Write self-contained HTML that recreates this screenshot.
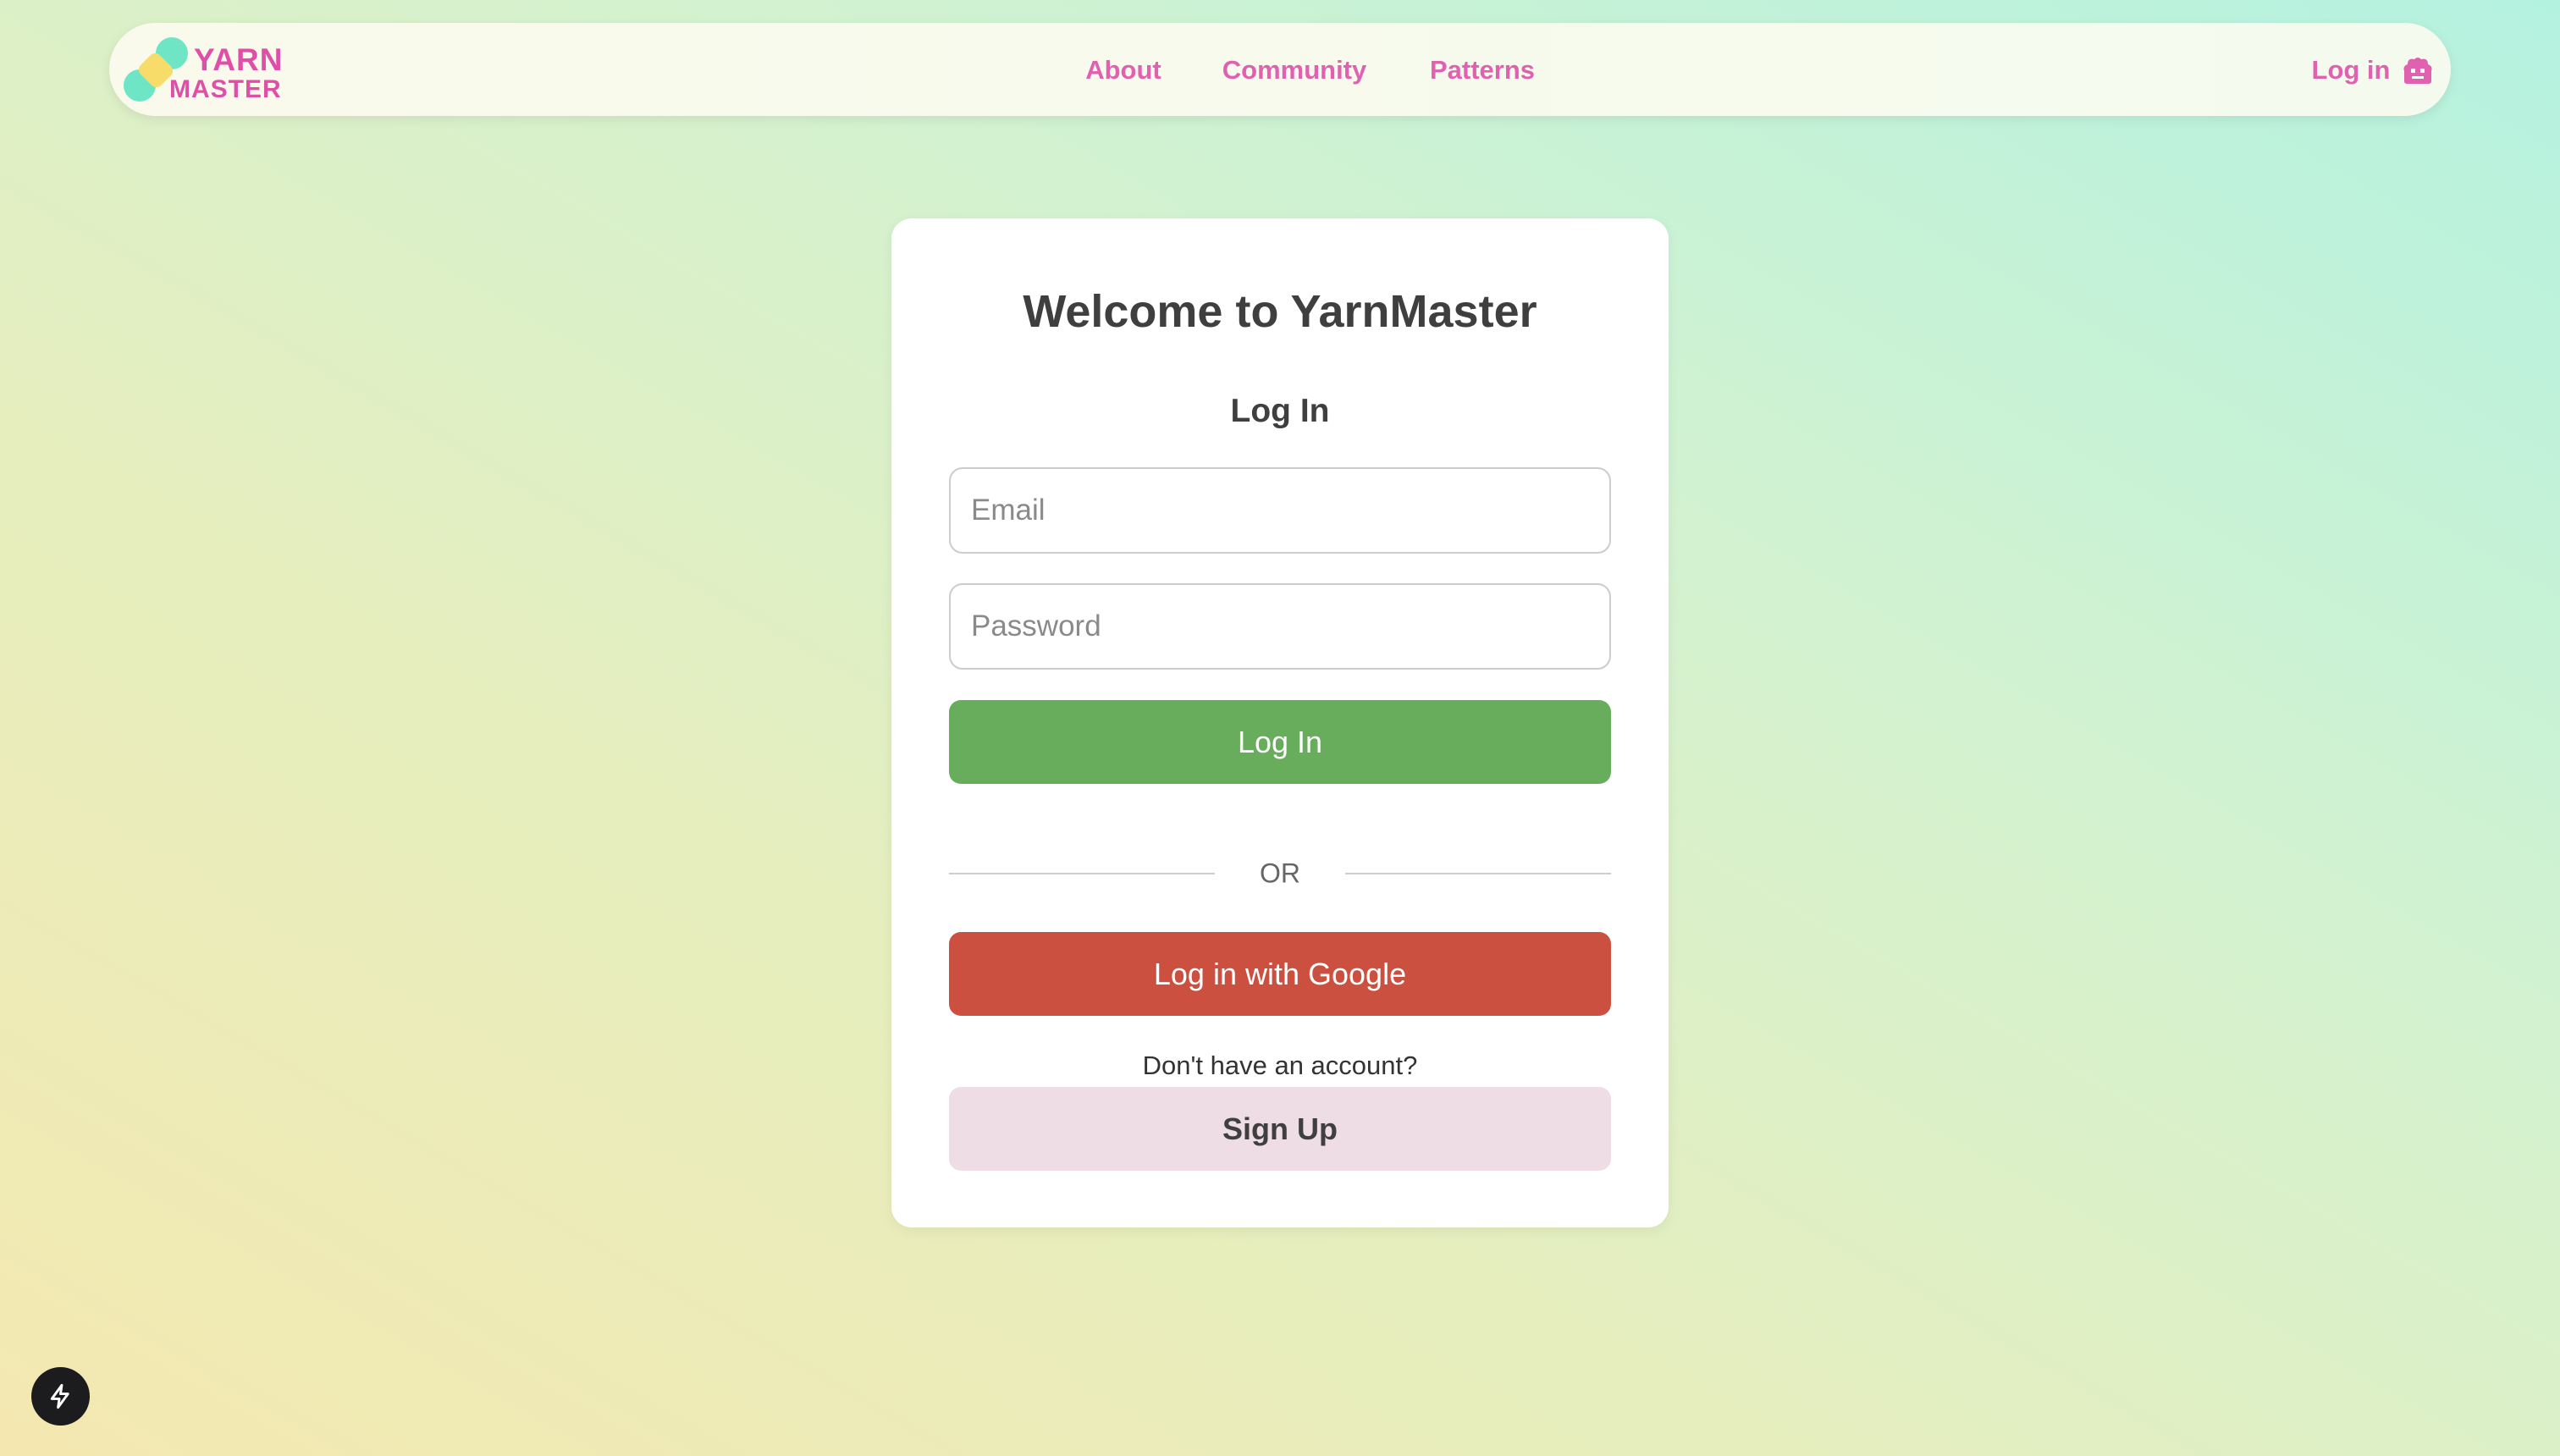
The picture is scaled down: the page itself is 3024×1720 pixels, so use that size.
<!DOCTYPE html>
<html><head><meta charset="utf-8"><style>
*{box-sizing:border-box;margin:0;padding:0}
html,body{width:3024px;height:1720px;overflow:hidden}
body{font-family:"Liberation Sans",sans-serif;background:linear-gradient(30deg,#f4e8b0 0%,#e6eebe 35%,#d2f2d0 65%,#b4f2e0 100%);position:relative}
.nav{position:absolute;left:129px;top:27px;width:2766px;height:110px;border-radius:55px;background:linear-gradient(90deg,#fafaec,#f4fbee);box-shadow:0 4px 14px rgba(0,0,0,.08)}
.lnk{position:absolute;top:83px;transform:translate(-50%,-50%);color:#e061b0;font-weight:bold;font-size:31px}
.card{position:absolute;left:1053px;top:258px;width:918px;height:1192px;background:#fff;border-radius:24px;box-shadow:0 4px 16px rgba(0,0,0,.06)}
.c{position:absolute;left:0;width:100%;text-align:center;transform:translateY(-50%)}
.inp{position:absolute;left:68px;width:782px;height:102px;border:2px solid #ccc;border-radius:16px;font-size:35px;color:#8a8a8a;padding-left:24px;line-height:98px}
.btn{position:absolute;left:68px;width:782px;height:99px;border-radius:14px;color:#fff;font-size:36px;text-align:center;line-height:99px}
</style></head><body>
<div class="nav"></div>
<svg style="position:absolute;left:143px;top:40px" width="84" height="85" viewBox="0 0 84 85">
<circle cx="60" cy="23" r="19" fill="#6ee6c6"/><circle cx="22" cy="61" r="19" fill="#6ee6c6"/>
<rect x="24" y="27" width="34" height="32" rx="8" transform="rotate(45 41 43)" fill="#f7dc6a"/>
</svg>
<div style="position:absolute;left:229px;top:52px;color:#df4fa8;font-weight:bold;font-size:37px;line-height:38px;letter-spacing:1px">YARN</div>
<div style="position:absolute;left:200px;top:90px;color:#df4fa8;font-weight:bold;font-size:30px;line-height:32px;letter-spacing:1px">MASTER</div>
<div class="lnk" style="left:1327px">About</div>
<div class="lnk" style="left:1529px">Community</div>
<div class="lnk" style="left:1751px">Patterns</div>
<div class="lnk" style="left:2777px">Log in</div>
<svg style="position:absolute;left:2838px;top:66px" width="36" height="34" viewBox="0 0 36 34"><path d="M6 10Q6 2 14 4Q18 0 22 4Q30 2 30 10Q36 12 34 18L34 30Q34 33 30 33L6 33Q2 33 2 30L2 18Q0 12 6 10Z" fill="#e061b0"/><rect x="10" y="15" width="5" height="5" fill="#fff"/><rect x="21" y="15" width="5" height="5" fill="#fff"/><rect x="11" y="24" width="14" height="3" fill="#fff"/></svg>
<div class="card">
<div class="c" style="top:110px;font-size:54px;font-weight:bold;color:#3f3f3f">Welcome to YarnMaster</div>
<div class="c" style="top:228px;font-size:39px;font-weight:bold;color:#3f3f3f">Log In</div>
<div class="inp" style="top:294px">Email</div>
<div class="inp" style="top:431px">Password</div>
<div class="btn" style="top:569px;background:#67ad5b">Log In</div>
<div style="position:absolute;left:68px;top:773px;width:314px;height:2px;background:#ccc"></div>
<div style="position:absolute;left:536px;top:773px;width:314px;height:2px;background:#ccc"></div>
<div class="c" style="top:774px;font-size:32px;color:#666">OR</div>
<div class="btn" style="top:843px;background:#cc5040">Log in with Google</div>
<div class="c" style="top:1001px;font-size:31px;color:#333">Don't have an account?</div>
<div class="btn" style="top:1026px;background:#efdde6;color:#3f3f3f;font-weight:bold">Sign Up</div>
</div>
<div style="position:absolute;left:37px;top:1615px;width:69px;height:69px;border-radius:50%;background:#1c1c1e"></div>
<svg style="position:absolute;left:54px;top:1632px" width="35" height="35" viewBox="0 0 24 24"><path d="M13 3L5 14h6l-1 7 8-11h-6z" fill="none" stroke="#fff" stroke-width="2" stroke-linejoin="round"/></svg>
</body></html>
